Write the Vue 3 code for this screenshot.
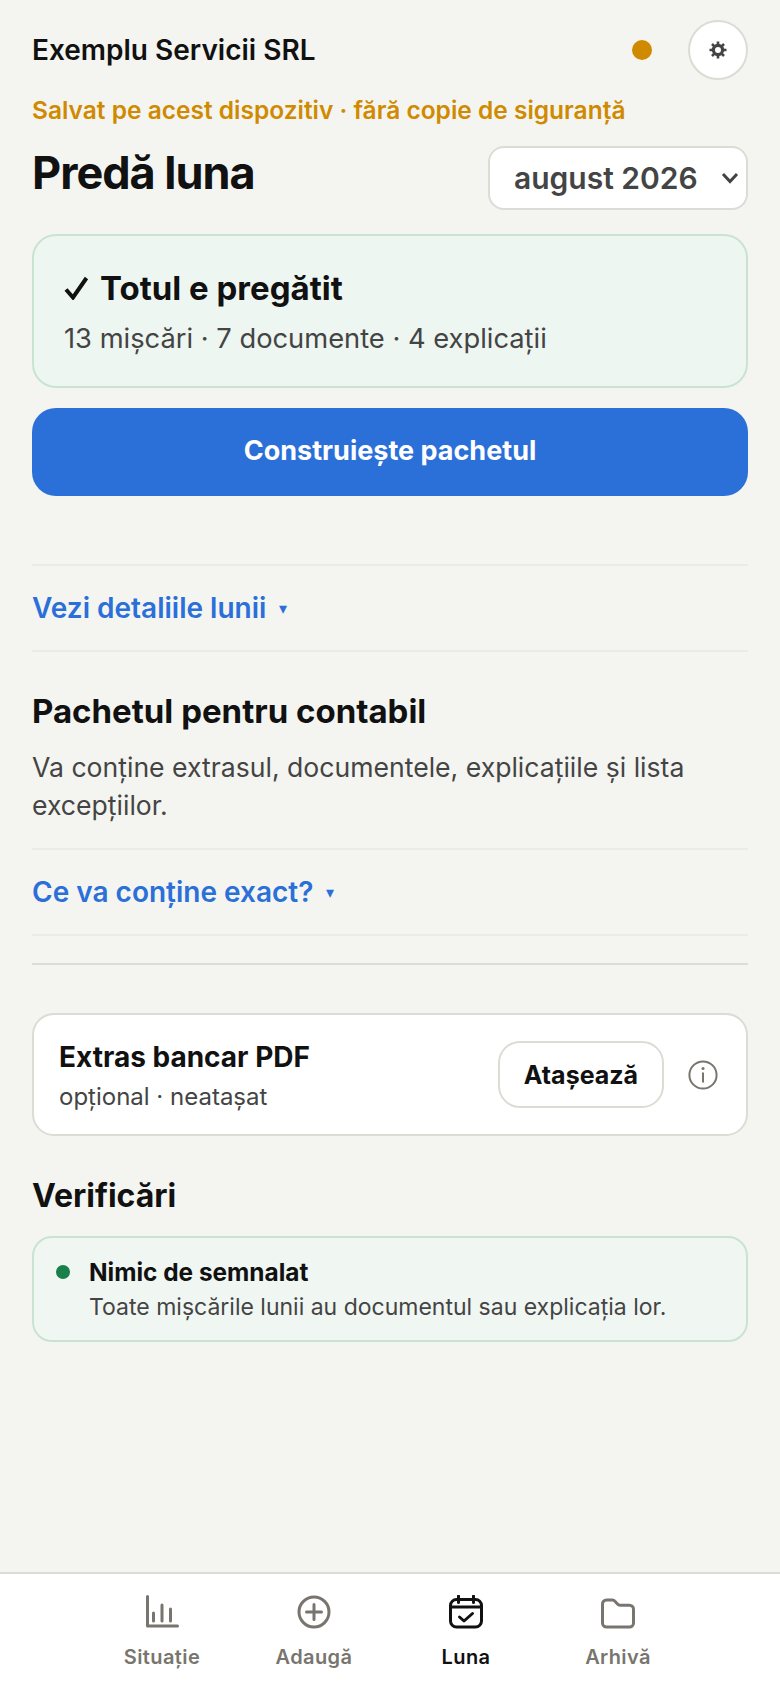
<script setup>
import { ref } from 'vue'

const month = ref('august 2026')
const months = ['iulie 2026', 'august 2026', 'septembrie 2026']
const activeTab = ref('luna')
const tabs = [
  { id: 'situatie', label: 'Situație' },
  { id: 'adauga', label: 'Adaugă' },
  { id: 'luna', label: 'Luna' },
  { id: 'arhiva', label: 'Arhivă' }
]
</script>

<template>
  <div class="page">
    <main class="content">
      <header class="top-row">
        <span class="company">Exemplu Servicii SRL</span>
        <div class="top-actions">
          <span class="status-dot"></span>
          <button type="button" class="gear-btn">
            <svg viewBox="0 0 18 18" width="18" height="18" fill="none" stroke="#444">
              <circle cx="9" cy="9" r="4.6" stroke-width="3.2" />
              <path stroke-width="2.6" d="M9 .5v3M9 14.5v3M.5 9h3M14.5 9h3M3 3l2.1 2.1M12.9 12.9L15 15M3 15l2.1-2.1M12.9 5.1L15 3" />
            </svg>
          </button>
        </div>
      </header>
      <p class="backup-note">Salvat pe acest dispozitiv · fără copie de siguranță</p>

      <div class="title-row">
        <h1>Predă luna</h1>
        <div class="month-select">
          <select v-model="month">
            <option v-for="m in months" :key="m" :value="m">{{ m }}</option>
          </select>
          <svg class="chevron" viewBox="0 0 18 12" width="18" height="12" fill="none">
            <path d="M2 2l7 7.5L16 2" stroke="#444" stroke-width="3" />
          </svg>
        </div>
      </div>

      <section class="ready-card">
        <div class="ready-title">
          <svg viewBox="0 0 25 24" width="25" height="24" fill="none">
            <path d="M2 13.5l7 8L22.5 2" stroke="#111" stroke-width="4" />
          </svg>
          <span>Totul e pregătit</span>
        </div>
        <div class="ready-sub">13 mișcări · 7 documente · 4 explicații</div>
      </section>

      <button type="button" class="primary-btn">Construiește pachetul</button>

      <div class="link-row first-link">
        <span class="link-text">Vezi detaliile lunii</span>
        <span class="caret">▾</span>
      </div>

      <section class="package">
        <h2>Pachetul pentru contabil</h2>
        <p>Va conține extrasul, documentele, explicațiile și lista excepțiilor.</p>
      </section>

      <div class="link-row">
        <span class="link-text">Ce va conține exact?</span>
        <span class="caret">▾</span>
      </div>

      <hr class="strong-rule" />

      <section class="attach-card">
        <div class="attach-info">
          <div class="attach-title">Extras bancar PDF</div>
          <div class="attach-sub">opțional · neatașat</div>
        </div>
        <button type="button" class="attach-btn">Atașează</button>
        <svg class="info-icon" viewBox="0 0 30 30" width="30" height="30" fill="none">
          <circle cx="15" cy="15" r="13.6" stroke="#78756e" stroke-width="2" />
          <circle cx="15" cy="8.6" r="1.5" fill="#78756e" />
          <path d="M15 12.5v10" stroke="#78756e" stroke-width="2" />
        </svg>
      </section>

      <h2 class="checks-title">Verificări</h2>
      <section class="check-card">
        <span class="check-dot"></span>
        <div>
          <div class="check-title">Nimic de semnalat</div>
          <div class="check-sub">Toate mișcările lunii au documentul sau explicația lor.</div>
        </div>
      </section>
    </main>

    <nav class="tabbar">
      <div v-for="tab in tabs" :key="tab.id" class="tab" :class="{ active: activeTab === tab.id }">
        <svg viewBox="0 0 34 34" width="34" height="34" fill="none" stroke="currentColor" stroke-width="3" stroke-linecap="round" stroke-linejoin="round">
          <template v-if="tab.id === 'situatie'">
            <path d="M2.5 1.5V31H32.5" />
            <path d="M8.5 18v8M17 10v16M25.5 14v12" />
          </template>
          <template v-else-if="tab.id === 'adauga'">
            <circle cx="17" cy="17" r="15" />
            <path d="M17 9.5v15M9.5 17h15" />
          </template>
          <template v-else-if="tab.id === 'luna'">
            <rect x="1.5" y="4.5" width="31" height="27.5" rx="6" />
            <path d="M1.5 12h31M9.5 1v6.5M24.5 1v6.5" />
            <path d="M10.5 22l4.5 4 8.5-7.5" />
          </template>
          <template v-else>
            <path d="M1.5 9a4 4 0 0 1 4-4h6a3 3 0 0 1 2.2 1l3 3.2a3 3 0 0 0 2.2 1h9.6a4 4 0 0 1 4 4V28a4 4 0 0 1-4 4h-23a4 4 0 0 1-4-4z" />
          </template>
        </svg>
        <span>{{ tab.label }}</span>
      </div>
    </nav>
  </div>
</template>

<style>
html, body {
  margin: 0;
  background: #f4f5f1;
}
</style>

<style scoped>
.page {
  width: 780px;
  height: 1688px;
  display: flex;
  flex-direction: column;
  font-family: Inter, "Noto Sans", sans-serif;
  color: #111;
  background: #f4f5f1;
}

.content {
  flex: 1;
  padding: 20px 32px 0;
}

.top-row {
  display: flex;
  align-items: center;
  justify-content: space-between;
  height: 60px;
}

.company {
  font-size: 28px;
  font-weight: 600;
}

.top-actions {
  display: flex;
  align-items: center;
  gap: 36px;
}

.status-dot {
  width: 20px;
  height: 20px;
  border-radius: 50%;
  background: #d08a00;
}

.gear-btn {
  display: flex;
  align-items: center;
  justify-content: center;
  width: 60px;
  height: 60px;
  border-radius: 50%;
  border: 2px solid #dcdcd5;
  background: #fff;
  padding: 0;
}

.backup-note {
  margin: 14px 0 0;
  font-size: 24.5px;
  line-height: 32px;
  font-weight: 600;
  color: #d08a00;
}

.title-row {
  display: flex;
  align-items: center;
  justify-content: space-between;
  margin-top: 20px;
}

h1 {
  margin: 0 0 10px;
  font-size: 45px;
  line-height: 54px;
  font-weight: 700;
  letter-spacing: -1px;
}

.month-select {
  position: relative;
  width: 260px;
  height: 64px;
}

.month-select select {
  appearance: none;
  width: 100%;
  height: 100%;
  padding: 0 0 0 24px;
  border: 2px solid #dcdcd5;
  border-radius: 16px;
  background: #fff;
  font-family: inherit;
  font-size: 30px;
  font-weight: 600;
  color: #444;
}

.chevron {
  position: absolute;
  right: 9px;
  top: 26px;
}

.ready-card {
  margin-top: 24px;
  padding: 30px 28px 28px 30px;
  border: 2px solid #c9e3d3;
  border-radius: 24px;
  background: #eef6f2;
}

.ready-title {
  display: flex;
  align-items: center;
  gap: 11px;
  font-size: 33px;
  font-weight: 700;
  line-height: 44px;
}

.ready-sub {
  margin-top: 10px;
  font-size: 27.3px;
  line-height: 38px;
  color: #444;
}

.primary-btn {
  display: block;
  width: 100%;
  height: 88px;
  margin-top: 20px;
  padding: 0 0 3px;
  border: 0;
  border-radius: 24px;
  background: #2b6fd8;
  color: #fff;
  font-family: inherit;
  font-size: 27px;
  font-weight: 700;
}

.link-row {
  display: flex;
  align-items: center;
  gap: 13px;
  height: 88px;
  border-top: 2px solid #ebebe6;
  border-bottom: 2px solid #ebebe6;
  box-sizing: border-box;
}

.first-link {
  margin-top: 68px;
}

.link-text {
  font-size: 28px;
  font-weight: 600;
  color: #2b6fd8;
}

.caret {
  font-size: 16px;
  color: #2b6fd8;
}

.package {
  padding: 38px 0 24px;
}

h2 {
  margin: 0;
  font-size: 33px;
  font-weight: 700;
  line-height: 42px;
}

.package p {
  margin: 16px 0 0;
  font-size: 26.6px;
  line-height: 38px;
  color: #444;
}

.strong-rule {
  margin: 27px 0 0;
  border: 0;
  border-top: 2px solid #dcdcd5;
}

.attach-card {
  display: flex;
  align-items: center;
  height: 123px;
  box-sizing: border-box;
  margin-top: 48px;
  padding: 0 28px 0 25px;
  border: 2px solid #dcdcd5;
  border-radius: 22px;
  background: #fff;
}

.attach-info {
  flex: 1;
  padding-top: 5px;
}

.attach-title {
  font-size: 28px;
  font-weight: 700;
  line-height: 32px;
}

.attach-sub {
  margin-top: 8px;
  font-size: 24px;
  line-height: 32px;
  color: #444;
}

.attach-btn {
  width: 166px;
  height: 67px;
  border: 2px solid #dcdcd5;
  border-radius: 22px;
  background: #fff;
  color: #111;
  font-family: inherit;
  font-size: 25px;
  font-weight: 700;
}

.info-icon {
  margin-left: 24px;
}

.checks-title {
  margin-top: 39px;
  font-size: 32px;
}

.check-card {
  display: flex;
  align-items: flex-start;
  gap: 19px;
  margin-top: 19px;
  padding: 16px 22px;
  border: 2px solid #c9e3d3;
  border-radius: 20px;
  background: #f0f6f2;
}

.check-dot {
  flex: none;
  width: 14px;
  height: 14px;
  margin-top: 11px;
  border-radius: 50%;
  background: #1a8049;
}

.check-title {
  font-size: 24.4px;
  font-weight: 700;
  line-height: 36px;
}

.check-sub {
  font-size: 23px;
  line-height: 34px;
  color: #444;
}

.tabbar {
  display: flex;
  justify-content: center;
  height: 116px;
  border-top: 2px solid #dcdcd5;
  background: #fff;
  box-sizing: border-box;
}

.tab {
  width: 152px;
  display: flex;
  flex-direction: column;
  align-items: center;
  padding-top: 21px;
  color: #78756e;
  font-size: 20px;
  font-weight: 600;
  letter-spacing: 0.4px;
}

.tab span {
  margin-top: 16px;
  line-height: 24px;
}

.tab.active {
  color: #111;
}
</style>
